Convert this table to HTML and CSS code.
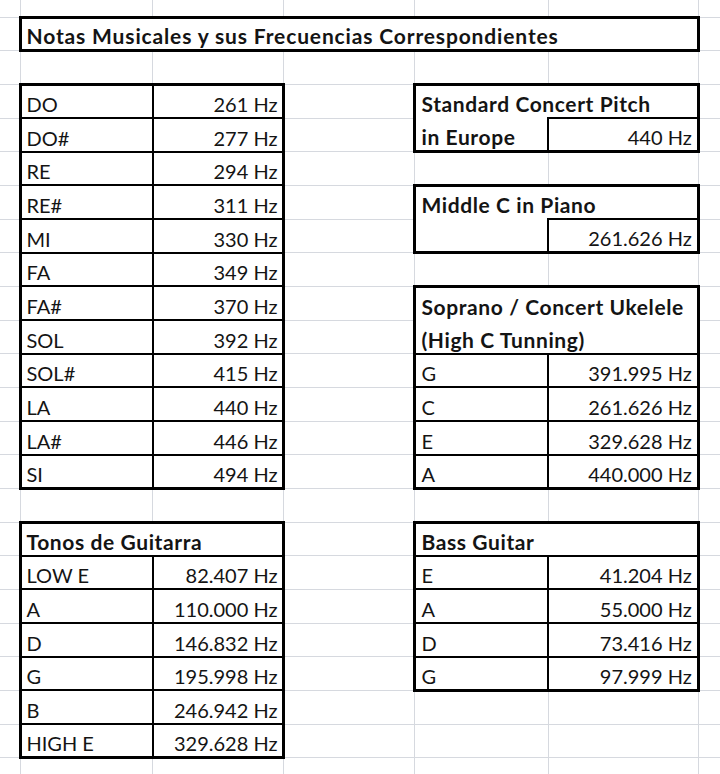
FILE: index.html
```html
<!DOCTYPE html>
<html lang="es">
<head>
<meta charset="utf-8">
<title>Notas Musicales</title>
<link rel="stylesheet" href="styles.css">
</head>
<body>
<table class="sheet">
<colgroup><col class="ca"><col class="cb"><col class="cc"><col class="cd"><col class="ce"><col class="cf"><col class="cg"></colgroup>
<tr class="r0"><td></td><td></td><td></td><td></td><td></td><td></td><td></td></tr>
<tr><td></td><td colspan="5" class="b h title T3 L3 R3 B3">Notas Musicales y sus Frecuencias Correspondientes</td><td></td></tr>
<tr><td></td><td></td><td></td><td></td><td></td><td></td><td></td></tr>
<tr><td></td><td class="b T3 L3 B2">DO</td><td class="b n T3 L2 R3 B2">261 Hz</td><td></td><td colspan="2" class="b h T3 L3 R3">Standard Concert Pitch</td><td></td></tr>
<tr><td></td><td class="b L3 B2">DO#</td><td class="b n L2 R3 B2">277 Hz</td><td></td><td class="b h L3 B3">in Europe</td><td class="b n T2 L2 R3 B3">440 Hz</td><td></td></tr>
<tr><td></td><td class="b L3 B2">RE</td><td class="b n L2 R3 B2">294 Hz</td><td></td><td></td><td></td><td></td></tr>
<tr><td></td><td class="b L3 B2">RE#</td><td class="b n L2 R3 B2">311 Hz</td><td></td><td colspan="2" class="b h T3 L3 R3">Middle C in Piano</td><td></td></tr>
<tr><td></td><td class="b L3 B2">MI</td><td class="b n L2 R3 B2">330 Hz</td><td></td><td class="b L3 B3"></td><td class="b n T2 L2 R3 B3">261.626 Hz</td><td></td></tr>
<tr><td></td><td class="b L3 B2">FA</td><td class="b n L2 R3 B2">349 Hz</td><td></td><td></td><td></td><td></td></tr>
<tr><td></td><td class="b L3 B2">FA#</td><td class="b n L2 R3 B2">370 Hz</td><td></td><td colspan="2" class="b h T3 L3 R3">Soprano / Concert Ukelele</td><td></td></tr>
<tr><td></td><td class="b L3 B2">SOL</td><td class="b n L2 R3 B2">392 Hz</td><td></td><td colspan="2" class="b h L3 R3 B2">(High C Tunning)</td><td></td></tr>
<tr><td></td><td class="b L3 B2">SOL#</td><td class="b n L2 R3 B2">415 Hz</td><td></td><td class="b L3 B2">G</td><td class="b n L2 R3 B2">391.995 Hz</td><td></td></tr>
<tr><td></td><td class="b L3 B2">LA</td><td class="b n L2 R3 B2">440 Hz</td><td></td><td class="b L3 B2">C</td><td class="b n L2 R3 B2">261.626 Hz</td><td></td></tr>
<tr><td></td><td class="b L3 B2">LA#</td><td class="b n L2 R3 B2">446 Hz</td><td></td><td class="b L3 B2">E</td><td class="b n L2 R3 B2">329.628 Hz</td><td></td></tr>
<tr><td></td><td class="b L3 B3">SI</td><td class="b n L2 R3 B3">494 Hz</td><td></td><td class="b L3 B3">A</td><td class="b n L2 R3 B3">440.000 Hz</td><td></td></tr>
<tr><td></td><td></td><td></td><td></td><td></td><td></td><td></td></tr>
<tr><td></td><td colspan="2" class="b h T3 L3 R3 B2">Tonos de Guitarra</td><td></td><td colspan="2" class="b h T3 L3 R3 B2">Bass Guitar</td><td></td></tr>
<tr><td></td><td class="b L3 B2">LOW E</td><td class="b n L2 R3 B2">82.407 Hz</td><td></td><td class="b L3 B2">E</td><td class="b n L2 R3 B2">41.204 Hz</td><td></td></tr>
<tr><td></td><td class="b L3 B2">A</td><td class="b n L2 R3 B2">110.000 Hz</td><td></td><td class="b L3 B2">A</td><td class="b n L2 R3 B2">55.000 Hz</td><td></td></tr>
<tr><td></td><td class="b L3 B2">D</td><td class="b n L2 R3 B2">146.832 Hz</td><td></td><td class="b L3 B2">D</td><td class="b n L2 R3 B2">73.416 Hz</td><td></td></tr>
<tr><td></td><td class="b L3 B2">G</td><td class="b n L2 R3 B2">195.998 Hz</td><td></td><td class="b L3 B3">G</td><td class="b n L2 R3 B3">97.999 Hz</td><td></td></tr>
<tr><td></td><td class="b L3 B2">B</td><td class="b n L2 R3 B2">246.942 Hz</td><td></td><td></td><td></td><td></td></tr>
<tr><td></td><td class="b L3 B3">HIGH E</td><td class="b n L2 R3 B3">329.628 Hz</td><td></td><td></td><td></td><td></td></tr>
<tr class="rz"><td></td><td></td><td></td><td></td><td></td><td></td><td></td></tr>
</table>
</body>
</html>
```
FILE: styles.css
```css
html, body {
  margin: 0;
  padding: 0;
  background: #ffffff;
  overflow: hidden;
}

.sheet {
  border-collapse: collapse;
  table-layout: fixed;
  width: 730px;
  font-family: Lato, "Liberation Sans", sans-serif;
  font-size: 20px;
  color: #141414;
  font-variant-numeric: tabular-nums;
}

.ca { width: 20px; }
.cb { width: 132.7px; }
.cc { width: 131.3px; }
.cd { width: 131px; }
.ce { width: 133.3px; }
.cf { width: 150px; }
.cg { width: 31.7px; }

.sheet tr { height: 33.68px; }
.sheet tr.r0 { height: 17px; }
.sheet tr.rz { height: 30px; }

.sheet td {
  border: 1px solid #d6d9df;
  padding: 0 5px 1px 5px;
  vertical-align: bottom;
  line-height: 24px;
  white-space: nowrap;
  overflow: hidden;
}

.sheet tr.r0 td { border-top: none; }
.sheet td:first-child { border-left: none; }
.sheet td:last-child { border-right: none; }

.sheet td.b { border-color: #ffffff; background: #ffffff; }
.sheet td.h { font-weight: 700; font-size: 21px; letter-spacing: 0.6px; }
.sheet td.title { letter-spacing: 0.85px; }
.sheet td.n { text-align: right; }

.sheet td.T3 { border-top: 3px solid #000; }
.sheet td.B3 { border-bottom: 3px solid #000; }
.sheet td.L3 { border-left: 3px solid #000; }
.sheet td.R3 { border-right: 3px solid #000; }
.sheet td.T2 { border-top: 2px solid #000; }
.sheet td.B2 { border-bottom: 2px solid #000; }
.sheet td.L2 { border-left: 2px solid #000; }
```
